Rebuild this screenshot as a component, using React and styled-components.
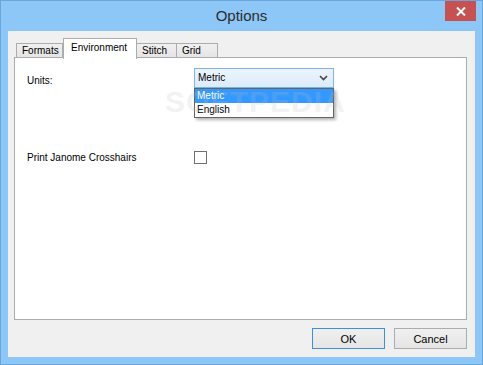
import React from 'react'
import styled, { createGlobalStyle } from 'styled-components'

const GlobalStyle = createGlobalStyle`
  html, body {
    margin: 0;
    padding: 0;
    background: #8cc7f7;
  }
  * {
    box-sizing: border-box;
  }
`

const Window = styled.div`
  width: 483px;
  height: 365px;
  display: flex;
  flex-direction: column;
  background: #8cc7f7;
  border: 1px solid #6aa6dc;
  font-family: 'Liberation Sans', Arial, sans-serif;
  font-size: 10px;
  color: #000;
`

const TitleBar = styled.div`
  height: 30px;
  display: grid;
  grid-template-columns: 1fr auto 1fr;
  align-items: start;
`

const Title = styled.div`
  grid-column: 2;
  font-size: 15px;
  line-height: 30px;
  color: #2b2b2b;
`

const CloseButton = styled.div`
  grid-column: 3;
  justify-self: end;
  width: 31px;
  height: 20px;
  margin-right: 6px;
  background: #c75050;
  display: flex;
  align-items: center;
  justify-content: center;
`

const Client = styled.div`
  flex: 1;
  margin: 0 7px 7px 7px;
  background: #f0f0f0;
  display: flex;
  flex-direction: column;
  padding: 7px 8px 8px 6px;
`

const TabStrip = styled.div`
  height: 19px;
  display: flex;
  align-items: flex-end;
  padding-left: 2px;
  position: relative;
  z-index: 1;
`

const Tab = styled.div`
  width: ${p => p.w}px;
  height: ${p => (p.active ? 21 : 14)}px;
  margin-bottom: ${p => (p.active ? -2 : 0)}px;
  align-self: ${p => (p.active ? 'flex-start' : 'flex-end')};
  border: 1px solid #acacac;
  border-bottom: none;
  border-left: ${p => (p.first || p.active ? '1px solid #acacac' : 'none')};
  background: ${p => (p.active ? '#fff' : 'linear-gradient(#f0f0f0, #e5e5e5)')};
  padding: ${p => (p.active ? '3px 0 0 7px' : '1px 0 0 5px')};
  line-height: 12px;
  white-space: nowrap;
`

const Panel = styled.div`
  flex: 1;
  background: #fff;
  border: 1px solid #acacac;
  padding: 10px 12px;
  position: relative;
`

const FormGrid = styled.div`
  display: grid;
  grid-template-columns: 167px 140px;
  grid-template-rows: 20px 19px;
  row-gap: 63px;
`

const Label = styled.div`
  padding-top: ${p => p.pt || 0}px;
  line-height: 12px;
  white-space: nowrap;
`

const SelectWrap = styled.div`
  position: relative;
  z-index: 2;
`

const Select = styled.div`
  height: 20px;
  border: 1px solid #7eb4ea;
  background: linear-gradient(#ecf4fc, #dcecfc);
  display: flex;
  align-items: center;
  justify-content: space-between;
  padding: 0 5px 0 3px;
  line-height: 12px;
`

const List = styled.div`
  position: absolute;
  left: 0;
  top: 20px;
  width: 140px;
  border: 1px solid #646464;
  background: #fff;
  box-shadow: 2px 2px 3px rgba(0, 0, 0, 0.3);
`

const Option = styled.div`
  height: 14px;
  line-height: 14px;
  padding-left: 2px;
  background: ${p => (p.selected ? '#3399ff' : '#fff')};
  color: ${p => (p.selected ? '#fff' : '#000')};
`

const Checkbox = styled.div`
  width: 13px;
  height: 13px;
  border: 1px solid #707070;
  background: #fff;
`

const Watermark = styled.div`
  position: absolute;
  left: 150px;
  top: 27px;
  font-size: 30px;
  font-weight: bold;
  letter-spacing: 1px;
  color: rgba(190, 190, 190, 0.2);
  pointer-events: none;
  z-index: 3;
`

const ButtonRow = styled.div`
  display: flex;
  justify-content: flex-end;
  gap: 9px;
  margin-top: 8px;
`

const Button = styled.div`
  width: 73px;
  height: 21px;
  border: 1px solid ${p => (p.primary ? '#3c8fe6' : '#acacac')};
  background: linear-gradient(#f0f0f0, #e5e5e5);
  display: flex;
  align-items: center;
  justify-content: center;
  font-size: 11px;
`

const Chevron = () => (
  <svg width="9" height="6" viewBox="0 0 9 6">
    <path d="M1 1 L4.5 4.5 L8 1" fill="none" stroke="#444" strokeWidth="1.6" />
  </svg>
)

const CloseX = () => (
  <svg width="10" height="9" viewBox="0 0 10 9">
    <path d="M1 0.5 L9 8.5 M9 0.5 L1 8.5" stroke="#fff" strokeWidth="2" />
  </svg>
)

export default function App() {
  return (
    <>
      <GlobalStyle />
      <Window>
        <TitleBar>
          <Title>Options</Title>
          <CloseButton>
            <CloseX />
          </CloseButton>
        </TitleBar>
        <Client>
          <TabStrip>
            <Tab w={47} first>Formats</Tab>
            <Tab w={74} active>Environment</Tab>
            <Tab w={40}>Stitch</Tab>
            <Tab w={41}>Grid</Tab>
          </TabStrip>
          <Panel>
            <Watermark>SOFTPEDIA</Watermark>
            <FormGrid>
              <Label pt={7}>Units:</Label>
              <SelectWrap>
                <Select>
                  <span>Metric</span>
                  <Chevron />
                </Select>
                <List>
                  <Option selected>Metric</Option>
                  <Option>English</Option>
                </List>
              </SelectWrap>
              <Label pt={1}>Print Janome Crosshairs</Label>
              <Checkbox />
            </FormGrid>
          </Panel>
          <ButtonRow>
            <Button primary>OK</Button>
            <Button>Cancel</Button>
          </ButtonRow>
        </Client>
      </Window>
    </>
  )
}
